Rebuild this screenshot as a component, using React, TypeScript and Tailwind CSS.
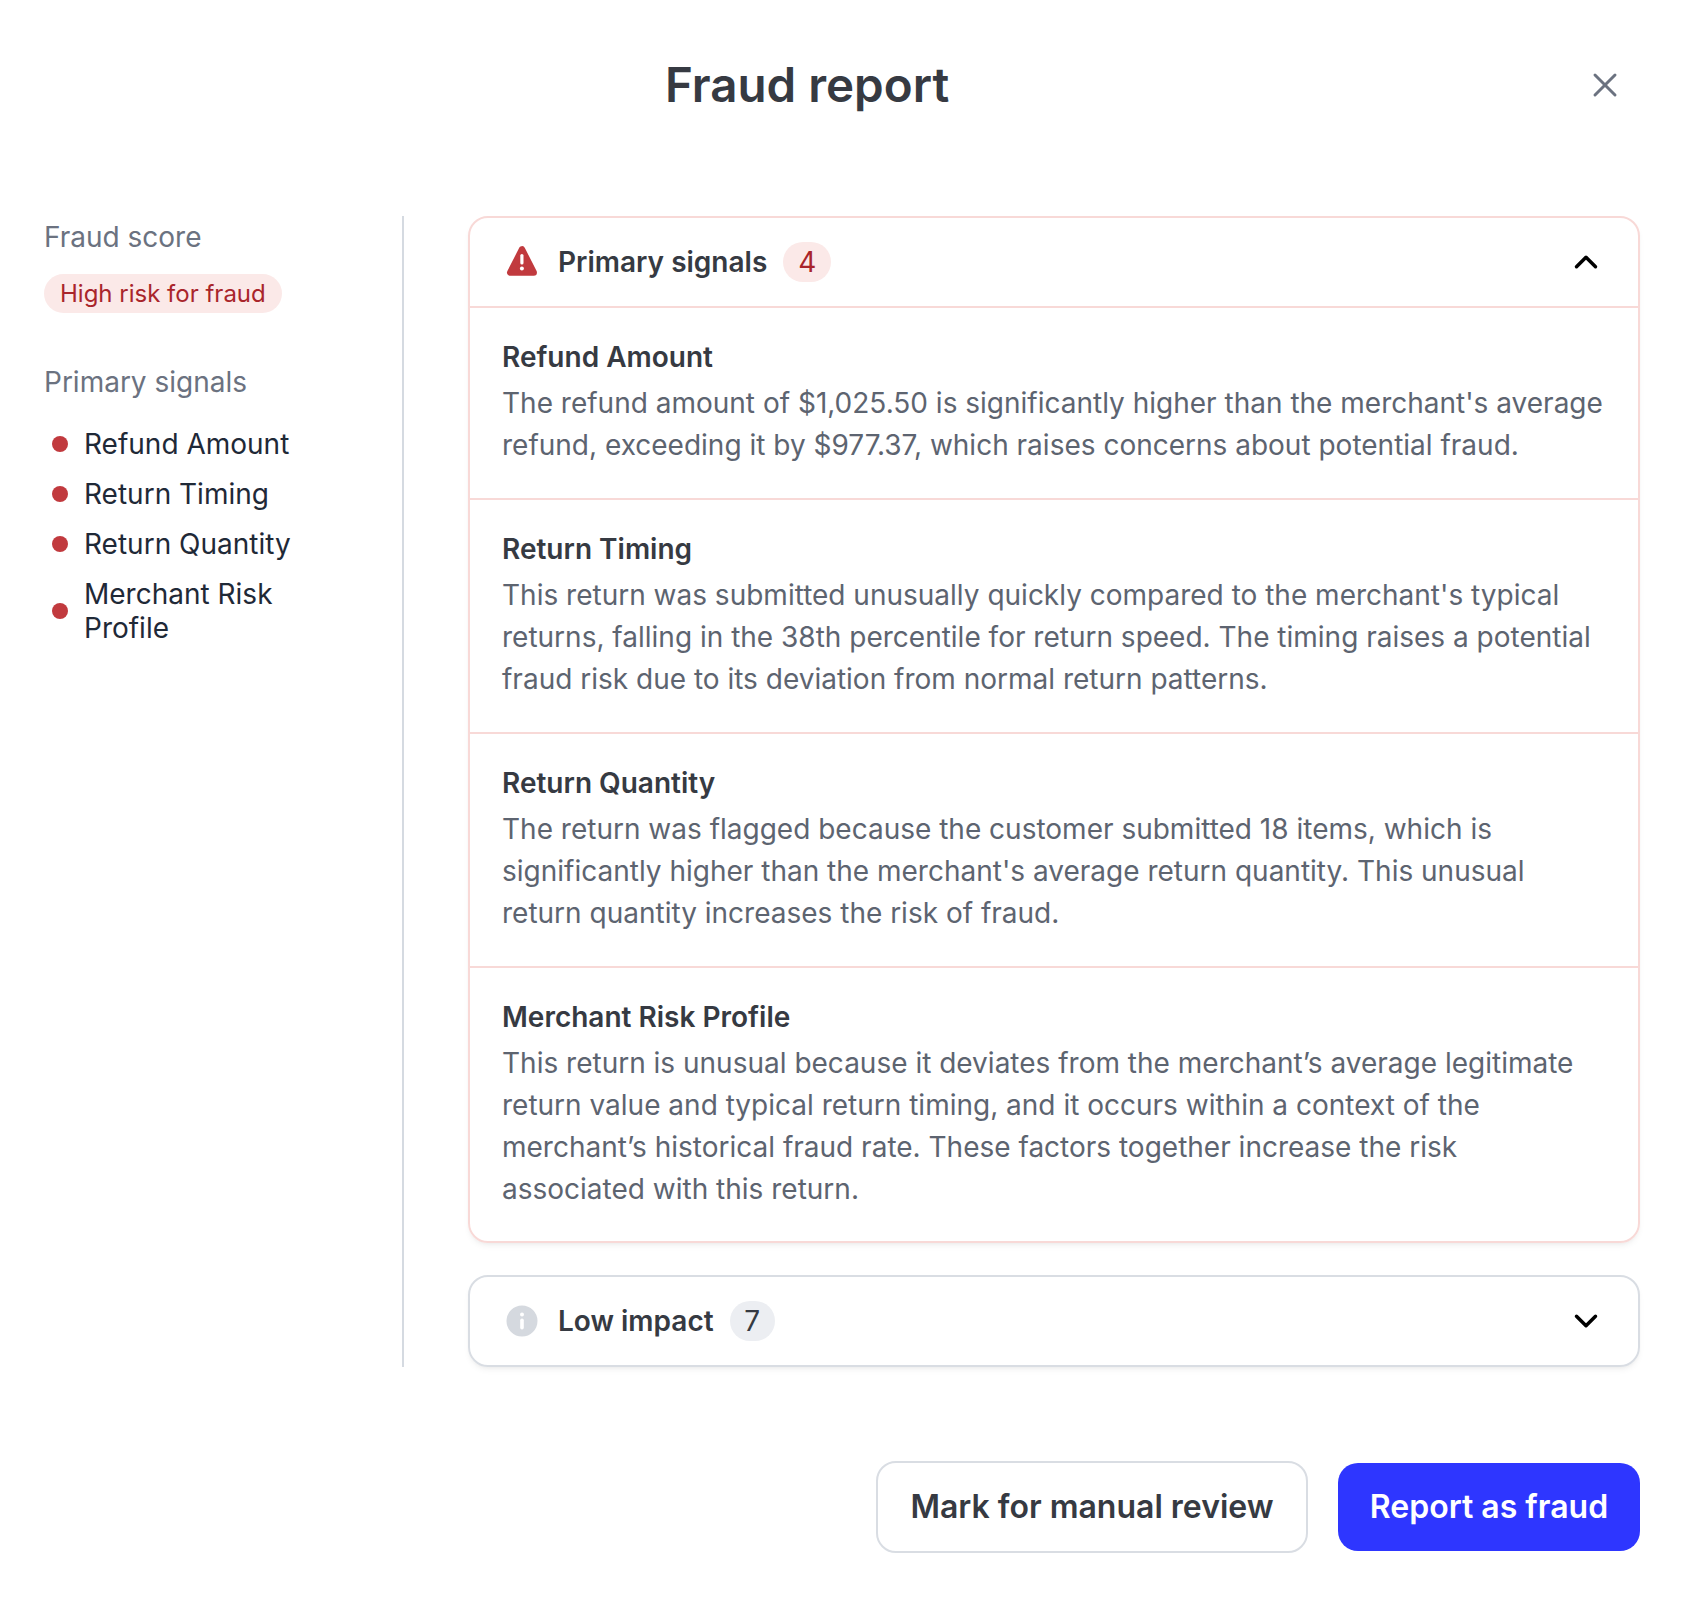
import { ChevronDown, ChevronUp, X } from 'lucide-react';

const signals = [
  {
    title: 'Refund Amount',
    text: "The refund amount of $1,025.50 is significantly higher than the merchant's average refund, exceeding it by $977.37, which raises concerns about potential fraud.",
  },
  {
    title: 'Return Timing',
    text: "This return was submitted unusually quickly compared to the merchant's typical returns, falling in the 38th percentile for return speed. The timing raises a potential fraud risk due to its deviation from normal return patterns.",
  },
  {
    title: 'Return Quantity',
    text: "The return was flagged because the customer submitted 18 items, which is significantly higher than the merchant's average return quantity. This unusual return quantity increases the risk of fraud.",
  },
  {
    title: 'Merchant Risk Profile',
    text: 'This return is unusual because it deviates from the merchant’s average legitimate return value and typical return timing, and it occurs within a context of the merchant’s historical fraud rate. These factors together increase the risk associated with this return.',
  },
];

function WarningIcon() {
  return (
    <svg width="32" height="32" viewBox="0 0 32 32" className="shrink-0">
      <path d="M16 3.500 4.300 26.500h23.400z" fill="#c13a3e" stroke="#c13a3e" strokeWidth="6.500" strokeLinejoin="round" />
      <rect x="14.300" y="8" width="3.200" height="10.500" rx="1.600" fill="#fff" />
      <circle cx="15.900" cy="22.500" r="2" fill="#fff" />
    </svg>
  );
}

function InfoIcon() {
  return (
    <svg width="32" height="32" viewBox="0 0 32 32" className="shrink-0">
      <circle cx="16" cy="16" r="15.500" fill="#d5d9df" />
      <circle cx="16" cy="9.500" r="2" fill="#fff" />
      <rect x="14.200" y="13.500" width="3.600" height="11" rx="1.800" fill="#fff" />
    </svg>
  );
}

export default function App() {
  return (
    <div className="h-[1600px] w-[1690px] bg-white pr-[50px] font-['Inter',sans-serif] text-[28px] leading-[42px]">
      {/* Header */}
      <div className="flex h-[216px] items-start">
        <h1 className="ml-[665px] mt-[55px] text-[47.5px] leading-[60px] font-semibold text-[#363a42]">Fraud report</h1>
        <button className="ml-auto mr-[15px] mt-[65px] text-[#6b7280]">
          <X size={40} strokeWidth={1.800} />
        </button>
      </div>

      <div className="flex">
        {/* Sidebar */}
        <div className="h-[1151px] w-[404px] shrink-0 border-r-2 border-[#d5dae1] pl-[44px]">
          <div className="text-[#6b7280]">Fraud score</div>
          <span className="mt-[16px] inline-block rounded-full bg-[#fbe9e8] px-4 text-[24px] leading-[39px] text-[#a9252b]">
            High risk for fraud
          </span>
          <div className="mt-[48px] text-[#6b7280]">Primary signals</div>
          <ul className="mt-[24px] flex w-[270px] flex-col gap-4 text-[#1f2937]">
            {signals.map((s) => (
              <li key={s.title} className="flex items-center gap-[16px] pl-[8px] leading-[34px]">
                <span className="size-4 shrink-0 rounded-full bg-[#c13a3e]" />
                <span>{s.title}</span>
              </li>
            ))}
          </ul>
        </div>

        {/* Signals */}
        <div className="ml-[64px] flex-1">
          <div className="rounded-[20px] border-2 border-[#f8d9d7] shadow-md shadow-black/5">
            <div className="flex h-[90px] items-center border-b-2 border-[#f8d9d7] pl-[36px] pr-[33px]">
              <WarningIcon />
              <span className="ml-[20px] font-semibold text-[#363a42]">Primary signals</span>
              <span className="ml-4 flex h-10 w-[48px] items-center justify-center rounded-full bg-[#fbe9e8] text-[#a9252b]">4</span>
              <ChevronUp size={38} strokeWidth={2.200} className="ml-auto text-black" />
            </div>
            {signals.map((s, i) => (
              <div key={s.title} className={`px-[32px] pt-[28px] pb-[32px] last:pb-[31px] ${i > 0 ? 'border-t-2 border-[#f8d9d7]' : ''}`}>
                <div className="mb-[4px] font-semibold text-[#363a42]">{s.title}</div>
                <p className="text-[#5d6470]">{s.text}</p>
              </div>
            ))}
          </div>

          <div className="mt-[32px] flex h-[92px] items-center rounded-[20px] border-2 border-[#d9dde3] pl-[36px] pr-[33px] shadow-md shadow-black/5">
            <InfoIcon />
            <span className="ml-[20px] font-semibold text-[#363a42]">Low impact</span>
            <span className="ml-4 flex h-10 w-[45px] items-center justify-center rounded-full bg-[#eceef2] text-[#363a42]">7</span>
            <ChevronDown size={38} strokeWidth={2.200} className="ml-auto text-black" />
          </div>
        </div>
      </div>

      {/* Footer */}
      <div className="mt-[94px] flex items-center justify-end gap-[30px]">
        <button className="h-[92px] w-[432px] rounded-[20px] border-2 border-[#d9dde3] text-[32px] font-semibold text-[#363a42]">
          Mark for manual review
        </button>
        <button className="h-[88px] w-[302px] rounded-[20px] bg-[#2e36ff] text-[32px] font-semibold text-white">
          Report as fraud
        </button>
      </div>
    </div>
  );
}
